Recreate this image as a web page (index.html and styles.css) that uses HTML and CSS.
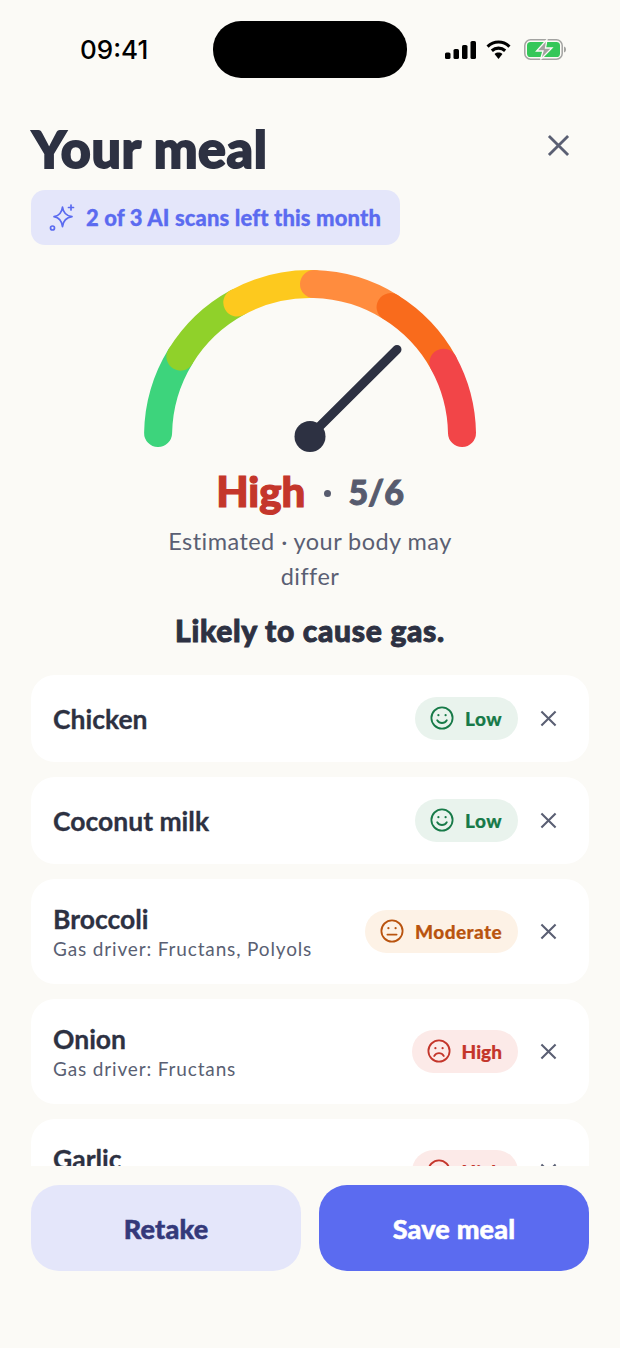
FILE: index.html
```html
<!DOCTYPE html>
<html lang="en">
<head>
    <meta charset="UTF-8">
    <meta name="viewport" content="width=device-width, initial-scale=1.0">
    <title>Your meal</title>
    <link rel="stylesheet" href="styles.css">
</head>
<body>
    <svg class="icon-defs" width="0" height="0">
        <symbol id="i-close" viewBox="0 0 18 18">
            <path d="M1.5 1.5 16.5 16.5M16.5 1.5 1.5 16.5" fill="none" stroke="currentColor" stroke-width="2.2"/>
        </symbol>
        <symbol id="i-happy" viewBox="0 0 24 24">
            <circle cx="12" cy="12" r="10.6" fill="none" stroke="currentColor" stroke-width="1.8"/>
            <circle cx="8.4" cy="9.2" r="1.1" fill="currentColor"/>
            <circle cx="15.6" cy="9.2" r="1.1" fill="currentColor"/>
            <path d="M7.2 14.2c1.2 1.9 2.9 2.8 4.8 2.8s3.6-.9 4.8-2.8" fill="none" stroke="currentColor" stroke-width="1.8" stroke-linecap="round"/>
        </symbol>
        <symbol id="i-neutral" viewBox="0 0 24 24">
            <circle cx="12" cy="12" r="10.6" fill="none" stroke="currentColor" stroke-width="1.8"/>
            <circle cx="8.4" cy="9.2" r="1.1" fill="currentColor"/>
            <circle cx="15.6" cy="9.2" r="1.1" fill="currentColor"/>
            <path d="M7.4 15.6h9.2" fill="none" stroke="currentColor" stroke-width="1.8" stroke-linecap="round"/>
        </symbol>
        <symbol id="i-sad" viewBox="0 0 24 24">
            <circle cx="12" cy="12" r="10.6" fill="none" stroke="currentColor" stroke-width="1.8"/>
            <circle cx="8.4" cy="9.2" r="1.1" fill="currentColor"/>
            <circle cx="15.6" cy="9.2" r="1.1" fill="currentColor"/>
            <path d="M7.2 17c1.2-1.9 2.9-2.8 4.8-2.8s3.6.9 4.8 2.8" fill="none" stroke="currentColor" stroke-width="1.8" stroke-linecap="round"/>
        </symbol>
    </svg>

    <div class="screen">
        <!-- status bar -->
        <div class="status-bar">
            <span class="time">09:41</span>
            <div class="island"></div>
            <div class="status-icons">
                <svg width="31" height="18" viewBox="0 0 31 18">
                    <rect x="0" y="11.5" width="5.5" height="6.5" rx="1.6" fill="#000"/>
                    <rect x="8.5" y="8" width="5.5" height="10" rx="1.6" fill="#000"/>
                    <rect x="17" y="4" width="5.5" height="14" rx="1.6" fill="#000"/>
                    <rect x="25.5" y="0" width="5.5" height="18" rx="1.6" fill="#000"/>
                </svg>
                <svg width="25" height="19" viewBox="0 0 24 18">
                    <path d="M1.5 6.2C7.6.4 16.4.4 22.5 6.2" fill="none" stroke="#000" stroke-width="3"/>
                    <path d="M5.6 10.2c3.7-3.4 9.1-3.4 12.8 0" fill="none" stroke="#000" stroke-width="3"/>
                    <path d="M8.2 13.2c2.3-1.9 5.3-1.9 7.6 0L12 18z" fill="#000"/>
                </svg>
                <svg class="battery" width="42" height="21" viewBox="0 0 42 21">
                    <rect x="0.8" y="0.8" width="37.4" height="19.4" rx="5.8" fill="none" stroke="#a3a3a1" stroke-width="1.5"/>
                    <rect x="3" y="3" width="33" height="15" rx="3.6" fill="#35c759"/>
                    <path d="M40 7.5c1.3.4 2 1.5 2 3s-.7 2.6-2 3z" fill="#a3a3a1"/>
                    <path d="M23 .5 12.500 12h6.500L16.500 20.500 28 9h-6.500z" fill="#a3a3a1" stroke="#fbfaf6" stroke-width="1.3"/>
                </svg>
            </div>
        </div>

        <div class="header">
            <h1 class="title">Your meal</h1>
            <svg class="header-close"><use href="#i-close"/></svg>
        </div>

        <div class="scan-chip">
            <svg class="scan-icon" width="26" height="28" viewBox="0 0 26 28" fill="none" stroke="currentColor" stroke-width="1.7" stroke-linejoin="round" stroke-linecap="round">
                <path d="M13.5 3c.7 6 3.4 8.800 9.500 9.700-6.100.9-8.800 3.700-9.500 10-.7-6.300-3.400-9.100-8.500-10 5.100-.9 7.800-3.700 8.500-9.700z"/>
                <path d="M22 1v5M19.5 3.500h5"/>
                <circle cx="3.5" cy="24" r="2"/>
            </svg>
            <span>2 of 3 AI scans left this month</span>
        </div>

        <svg class="gauge" width="360" height="200" viewBox="130 260 360 200" fill="none" stroke-width="28" stroke-linecap="round">
            <path d="M158.1 433A152 152 0 0 1 180.4 356.6" stroke="#3dd47c"/>
            <path d="M180.4 356.6A152 152 0 0 1 237.3 302.5" stroke="#90d12a"/>
            <path d="M237.3 302.5A152 152 0 0 1 314 284.1" stroke="#fdc91e"/>
            <path d="M314 284.1A152 152 0 0 1 390.6 307.1" stroke="#ff8c3e"/>
            <path d="M390.6 307.1A152 152 0 0 1 443.4 362.7" stroke="#f96b1c"/>
            <path d="M443.4 362.7A152 152 0 0 1 462 433" stroke="#f24548"/>
            <path d="M310 436 397 349.5" stroke="#2d3142" stroke-width="9"/>
            <circle cx="310" cy="436.5" r="15.5" fill="#2d3142"/>
        </svg>

        <div class="score">
            <span class="score-label">High</span>
            <span class="score-dot"></span>
            <span class="score-num">5/6</span>
        </div>
        <p class="estimate">Estimated · your body may differ</p>
        <p class="verdict">Likely to cause gas.</p>

        <div class="food-list">
            <div class="food-card">
                <div class="food-info">
                    <div class="food-name">Chicken</div>
                </div>
                <div class="badge badge-low">
                    <svg class="badge-icon"><use href="#i-happy"/></svg>
                    <span>Low</span>
                </div>
                <svg class="remove-icon"><use href="#i-close"/></svg>
            </div>
            <div class="food-card">
                <div class="food-info">
                    <div class="food-name">Coconut milk</div>
                </div>
                <div class="badge badge-low">
                    <svg class="badge-icon"><use href="#i-happy"/></svg>
                    <span>Low</span>
                </div>
                <svg class="remove-icon"><use href="#i-close"/></svg>
            </div>
            <div class="food-card food-card-tall">
                <div class="food-info">
                    <div class="food-name">Broccoli</div>
                    <div class="food-driver">Gas driver: Fructans, Polyols</div>
                </div>
                <div class="badge badge-moderate">
                    <svg class="badge-icon"><use href="#i-neutral"/></svg>
                    <span>Moderate</span>
                </div>
                <svg class="remove-icon"><use href="#i-close"/></svg>
            </div>
            <div class="food-card food-card-tall">
                <div class="food-info">
                    <div class="food-name">Onion</div>
                    <div class="food-driver">Gas driver: Fructans</div>
                </div>
                <div class="badge badge-high">
                    <svg class="badge-icon"><use href="#i-sad"/></svg>
                    <span>High</span>
                </div>
                <svg class="remove-icon"><use href="#i-close"/></svg>
            </div>
            <div class="food-card food-card-tall">
                <div class="food-info">
                    <div class="food-name">Garlic</div>
                    <div class="food-driver">Gas driver: Fructans</div>
                </div>
                <div class="badge badge-high">
                    <svg class="badge-icon"><use href="#i-sad"/></svg>
                    <span>High</span>
                </div>
                <svg class="remove-icon"><use href="#i-close"/></svg>
            </div>
        </div>

        <div class="actions">
            <button class="btn btn-retake">Retake</button>
            <button class="btn btn-save">Save meal</button>
        </div>
    </div>
</body>
</html>
```

FILE: styles.css
```css
* { box-sizing: border-box; }
body { margin: 0; background-color: #fbfaf6; font-family: "Lato", "Noto Sans", sans-serif; color: #2d3142; }
.icon-defs { display: block; width: 0; height: 0; overflow: hidden; }
.screen { display: flex; flex-direction: column; height: 1348px; overflow: hidden; }

.status-bar { display: flex; align-items: center; height: 78px; padding: 21px 0 0 80px; flex-shrink: 0; }
.time { width: 133px; font-family: "Inter", "Liberation Sans", sans-serif; font-size: 26px; font-weight: 500; color: #000; }
.island { width: 194px; height: 57px; background-color: #000; border-radius: 28px; }
.status-icons { display: flex; align-items: center; gap: 10px; margin-left: 38px; }
.battery { margin-left: 3px; }

.header { display: flex; align-items: center; justify-content: space-between; padding: 42px 50px 0 32px; flex-shrink: 0; }
.title { margin: 0; font-size: 52px; line-height: 56px; font-weight: 900; letter-spacing: 0.6px; -webkit-text-stroke: 1.8px #2d3142; }
.header-close { width: 23px; height: 23px; margin-top: -6px; color: #5a5f73; }

.scan-chip { display: flex; align-items: center; gap: 11px; align-self: flex-start; height: 55px; margin: 14px 0 0 31px; padding: 0 19px 0 18px; background-color: #e4e6fa; border-radius: 14px; color: #5b6bf0; font-size: 22px; font-weight: 900; letter-spacing: 0.12px; -webkit-text-stroke: 0.3px #5b6bf0; flex-shrink: 0; }
.scan-icon { flex-shrink: 0; }

.gauge { display: block; margin: 15px auto 0; flex-shrink: 0; }

.score { display: flex; align-items: center; justify-content: center; height: 50px; margin-top: 6px; flex-shrink: 0; }
.score-label { font-size: 42px; font-weight: 900; color: #c4362b; -webkit-text-stroke: 1.2px #c4362b; }
.score-dot { width: 7px; height: 7px; margin: 4px 17px 0 19px; background-color: #575b6e; border-radius: 50%; }
.score-num { font-size: 34px; font-weight: 900; color: #575b6e; -webkit-text-stroke: 1px #575b6e; }
.estimate { width: 320px; margin: 8px auto 0; font-size: 23.5px; line-height: 35px; letter-spacing: 0.45px; text-align: center; color: #5a5f73; flex-shrink: 0; }
.verdict { margin: 18px 0 0; font-size: 30px; line-height: 36px; font-weight: 900; letter-spacing: 0.7px; text-align: center; -webkit-text-stroke: 0.9px #2d3142; flex-shrink: 0; }

.food-list { display: flex; flex-direction: column; gap: 15.5px; flex: 1; min-height: 0; margin-top: 27px; padding: 0 31px; overflow: hidden; }
.food-card { display: flex; align-items: center; height: 86.5px; padding: 0 32px 0 22px; background-color: #fff; border-radius: 24px; flex-shrink: 0; }
.food-card-tall { height: 104.5px; }
.food-info { flex: 1; min-width: 0; margin-top: 2px; }
.food-name { font-size: 26.5px; line-height: 32px; font-weight: 700; -webkit-text-stroke: 0.3px #2d3142; }
.food-driver { margin-top: 2px; font-size: 19px; line-height: 24px; letter-spacing: 0.85px; color: #5a5f73; }

.badge { display: flex; align-items: center; gap: 11px; height: 43px; padding: 0 16px 0 15px; border-radius: 22px; font-size: 19px; font-weight: 900; letter-spacing: 0.4px; -webkit-text-stroke: 0.2px currentColor; }
.badge-icon { width: 24px; height: 24px; flex-shrink: 0; }
.badge-low { background-color: #e9f3ed; color: #177a48; }
.badge-moderate { background-color: #fdf2e6; color: #b9540f; }
.badge-high { background-color: #fceae8; color: #c4362b; letter-spacing: 0; }
.remove-icon { width: 17px; height: 17px; margin-left: 22px; color: #5a5f73; flex-shrink: 0; }

.actions { display: flex; gap: 18px; height: 182px; padding: 19px 31px 0; flex-shrink: 0; }
.btn { flex: 1; height: 86px; border: none; border-radius: 28px; font-family: inherit; font-size: 27px; font-weight: 900; letter-spacing: 0.2px; -webkit-text-stroke: 0.5px currentColor; }
.btn-retake { background-color: #e4e6fa; color: #34397a; }
.btn-save { background-color: #5b6bf0; color: #fff; }
```
